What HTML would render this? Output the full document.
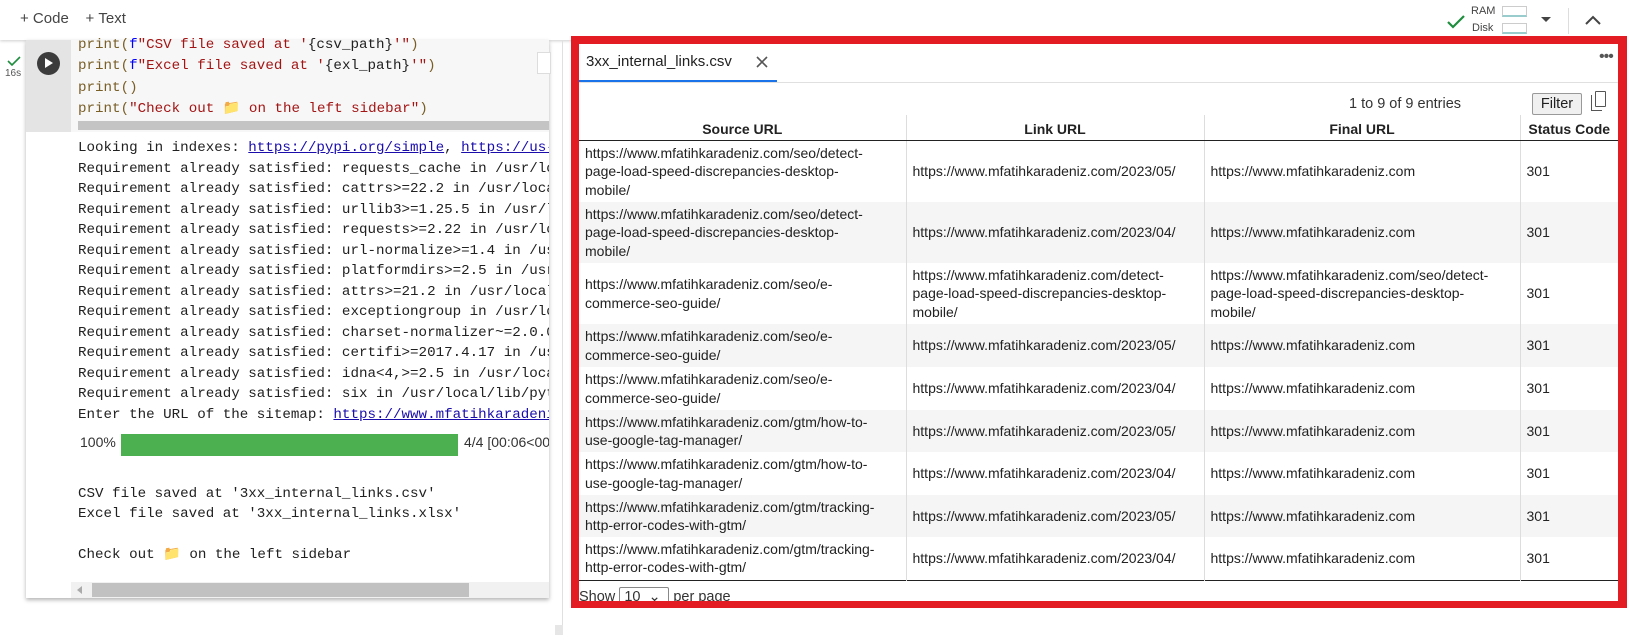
<!DOCTYPE html>
<html><head><meta charset="utf-8"><style>
*{margin:0;padding:0;box-sizing:border-box}
body{width:1627px;height:635px;overflow:hidden;background:#fff;position:relative;font-family:"Liberation Sans",Arial,sans-serif;color:#212121}
.abs{position:absolute}
.mono{font-family:"Liberation Mono","DejaVu Sans Mono",monospace;font-size:14.2px;white-space:pre;color:#212121}
.ol{position:absolute;left:78px;line-height:20px}
a{color:#1a0dab;text-decoration:underline}
table{border-collapse:collapse;font-size:14px;color:#222;table-layout:fixed}
td{padding:2px 6px;border-left:1px solid #ddd;line-height:18.5px;vertical-align:middle;word-break:normal}
td:first-child{border-left:none}
tr.g td{background:#f5f5f5}
th{font-weight:bold;text-align:center;height:25px;border-left:1px solid #ddd;border-bottom:1px solid #222;font-size:14px;vertical-align:bottom;padding-bottom:3px}
th:first-child{border-left:none}
</style></head><body>
<!-- toolbar -->
<div class="abs" style="left:0;top:0;width:1627px;height:40px;background:#fff;box-shadow:0 1px 3px rgba(0,0,0,.2)"></div>
<div class="abs" style="left:20px;top:10px;font-size:15px;color:#444">+&nbsp;Code &nbsp;&nbsp;&nbsp;+&nbsp;Text</div>
<svg class="abs" style="left:1446px;top:14px" width="20" height="16"><path d="M2 8 L7 13 L18 2" stroke="#1e8e3e" stroke-width="2.2" fill="none"/></svg>
<div class="abs" style="left:1471px;top:5px;font-size:11px;color:#444">RAM</div>
<div class="abs" style="left:1472px;top:22px;font-size:11px;color:#444">Disk</div>
<div class="abs" style="left:1502px;top:6px;width:25px;height:11px;border:1px solid #ccc;border-bottom:2px solid #9cc"></div>
<div class="abs" style="left:1502px;top:23px;width:25px;height:11px;border:1px solid #ccc;border-bottom:2px solid #9cc"></div>
<div class="abs" style="left:1541px;top:17px;border-left:5px solid transparent;border-right:5px solid transparent;border-top:5px solid #444"></div>
<div class="abs" style="left:1568px;top:8px;width:1px;height:26px;background:#ddd"></div>
<svg class="abs" style="left:1584px;top:14px" width="18" height="12"><path d="M2 10 L9 3 L16 10" stroke="#444" stroke-width="2" fill="none"/></svg>
<!-- left panel -->
<div class="abs" style="left:562px;top:40px;width:1px;height:595px;background:#e0e0e0"></div>
<div class="abs" style="left:26px;top:40px;width:523px;height:558px;background:#fff;box-shadow:0 2px 4px rgba(0,0,0,.3)"></div>
<div class="abs" style="left:26px;top:40px;width:45px;height:92px;background:#e4e4e4"></div>
<div class="abs" style="left:71px;top:40px;width:478px;height:92px;background:#f7f7f7"></div>
<div class="abs" style="left:78px;top:121px;width:471px;height:9px;background:#c4c4c4"></div>
<div class="abs" style="left:37px;top:52px;width:23px;height:23px;border-radius:50%;background:#3c3c3c"></div>
<div class="abs" style="left:45px;top:58px;border-top:5.5px solid transparent;border-bottom:5.5px solid transparent;border-left:8px solid #fff"></div>
<svg class="abs" style="left:7px;top:56px" width="14" height="10"><path d="M1 5 L5 9 L13 1" stroke="#1e8e3e" stroke-width="1.6" fill="none"/></svg>
<div class="abs" style="left:5px;top:68px;font-size:10px;color:#555">16s</div>
<div class="abs" style="left:537px;top:52px;width:14px;height:22px;border:1px solid #ddd;background:#fff"></div>
<div class="mono ol" style="top:35px;color:#795e26">print(<span style="color:#0000ff">f</span><span style="color:#a31515">"CSV file saved at '</span><span style="color:#212121">{csv_path}</span><span style="color:#a31515">'"</span>)</div>
<div class="mono ol" style="top:56px;color:#795e26">print(<span style="color:#0000ff">f</span><span style="color:#a31515">"Excel file saved at '</span><span style="color:#212121">{exl_path}</span><span style="color:#a31515">'"</span>)</div>
<div class="mono ol" style="top:78px;color:#795e26">print()</div>
<div class="mono ol" style="top:99px;color:#795e26">print(<span style="color:#a31515">"Check out 📁 on the left sidebar"</span>)</div>
<div class="abs" style="left:78px;top:138px;width:471px;height:290px;overflow:hidden">
<div class="mono" style="line-height:20.5px">Looking in indexes: <a>https://pypi.org/simple</a>, <a>https://us-python.pkg.dev</a>
Requirement already satisfied: requests_cache in /usr/local
Requirement already satisfied: cattrs&gt;=22.2 in /usr/local/lib
Requirement already satisfied: urllib3&gt;=1.25.5 in /usr/local
Requirement already satisfied: requests&gt;=2.22 in /usr/local
Requirement already satisfied: url-normalize&gt;=1.4 in /usr/l
Requirement already satisfied: platformdirs&gt;=2.5 in /usr/lo
Requirement already satisfied: attrs&gt;=21.2 in /usr/local/li
Requirement already satisfied: exceptiongroup in /usr/local
Requirement already satisfied: charset-normalizer~=2.0.0 in
Requirement already satisfied: certifi&gt;=2017.4.17 in /usr/l
Requirement already satisfied: idna&lt;4,&gt;=2.5 in /usr/local/l
Requirement already satisfied: six in /usr/local/lib/python3
Enter the URL of the sitemap: <a>https://www.mfatihkaradeniz.com/sitemap</a></div></div>
<div class="abs" style="left:80px;top:434px;font-size:14px;color:#333">100%</div>
<div class="abs" style="left:121px;top:434px;width:337px;height:22px;background:#4caf50"></div>
<div class="abs" style="left:464px;top:434px;width:85px;overflow:hidden;white-space:nowrap;font-size:14px;color:#333">4/4 [00:06&lt;00:00]</div>
<div class="mono ol" style="top:484px">CSV file saved at '3xx_internal_links.csv'</div>
<div class="mono ol" style="top:504px">Excel file saved at '3xx_internal_links.xlsx'</div>
<div class="mono ol" style="top:545px">Check out <span style="color:#d9a400">📁</span> on the left sidebar</div>
<div class="abs" style="left:71px;top:582px;width:478px;height:16px;background:#f1f1f1"></div>
<div class="abs" style="left:92px;top:583px;width:377px;height:14px;background:#c1c1c1"></div>
<div class="abs" style="left:77px;top:586px;border-top:4px solid transparent;border-bottom:4px solid transparent;border-right:5px solid #aaa"></div>
<div class="abs" style="left:555px;top:625px;width:8px;height:10px;background:#e6e6e6"></div>
<!-- right panel -->
<div class="abs" style="left:571px;top:36px;height:572px;border:8px solid #e31b23;border-right-width:9px;width:1056px"></div>
<div class="abs" style="left:579px;top:44px;width:1039px;height:557px;overflow:hidden;background:#fff">
 <div class="abs" style="left:0;top:38px;width:1039px;height:1px;background:#e0e0e0"></div>
 <div class="abs" style="left:7px;top:9px;font-size:15px;color:#222">3xx_internal_links.csv</div>
 <svg class="abs" style="left:177px;top:12px" width="12" height="12"><path d="M1 1 L11 11 M11 1 L1 11" stroke="#555" stroke-width="1.6"/></svg>
 <div class="abs" style="left:0;top:36px;width:198px;height:2px;background:#1a73e8"></div>
 <div class="abs" style="left:1020px;top:4px;font-size:16px;color:#555;letter-spacing:-1px">•••</div>
 <div class="abs" style="left:770px;top:52px;font-size:14.5px;color:#333">1 to 9 of 9 entries</div>
 <div class="abs" style="left:953px;top:49px;width:50px;height:22px;border:1px solid #999;border-radius:2px;background:#f0f0f0;font-size:14.5px;text-align:center;line-height:20px">Filter</div>
 <div class="abs" style="left:1016px;top:47px;width:11px;height:16px;border:1.5px solid #555;border-radius:1px"></div>
 <div class="abs" style="left:1012px;top:51px;width:11px;height:16px;border-left:1.5px solid #555;border-bottom:1.5px solid #555;background:transparent"></div>
 <table class="abs" style="left:0;top:71px;width:1039px">
 <colgroup><col style="width:327px"><col style="width:298px"><col style="width:316px"><col style="width:98px"></colgroup>
 <tr><th>Source URL</th><th>Link URL</th><th>Final URL</th><th>Status Code</th></tr>
 <tr style="height:62px"><td>https://www.mfatihkaradeniz.com/seo/detect-<br>page-load-speed-discrepancies-desktop-<br>mobile/</td><td>https://www.mfatihkaradeniz.com/2023/05/</td><td>https://www.mfatihkaradeniz.com</td><td>301</td></tr>
 <tr class="g" style="height:61px"><td>https://www.mfatihkaradeniz.com/seo/detect-<br>page-load-speed-discrepancies-desktop-<br>mobile/</td><td>https://www.mfatihkaradeniz.com/2023/04/</td><td>https://www.mfatihkaradeniz.com</td><td>301</td></tr>
 <tr style="height:61px"><td>https://www.mfatihkaradeniz.com/seo/e-<br>commerce-seo-guide/</td><td>https://www.mfatihkaradeniz.com/detect-<br>page-load-speed-discrepancies-desktop-<br>mobile/</td><td>https://www.mfatihkaradeniz.com/seo/detect-<br>page-load-speed-discrepancies-desktop-<br>mobile/</td><td>301</td></tr>
 <tr class="g" style="height:43px"><td>https://www.mfatihkaradeniz.com/seo/e-<br>commerce-seo-guide/</td><td>https://www.mfatihkaradeniz.com/2023/05/</td><td>https://www.mfatihkaradeniz.com</td><td>301</td></tr>
 <tr style="height:43px"><td>https://www.mfatihkaradeniz.com/seo/e-<br>commerce-seo-guide/</td><td>https://www.mfatihkaradeniz.com/2023/04/</td><td>https://www.mfatihkaradeniz.com</td><td>301</td></tr>
 <tr class="g" style="height:42px"><td>https://www.mfatihkaradeniz.com/gtm/how-to-<br>use-google-tag-manager/</td><td>https://www.mfatihkaradeniz.com/2023/05/</td><td>https://www.mfatihkaradeniz.com</td><td>301</td></tr>
 <tr style="height:43px"><td>https://www.mfatihkaradeniz.com/gtm/how-to-<br>use-google-tag-manager/</td><td>https://www.mfatihkaradeniz.com/2023/04/</td><td>https://www.mfatihkaradeniz.com</td><td>301</td></tr>
 <tr class="g" style="height:42px"><td>https://www.mfatihkaradeniz.com/gtm/tracking-<br>http-error-codes-with-gtm/</td><td>https://www.mfatihkaradeniz.com/2023/05/</td><td>https://www.mfatihkaradeniz.com</td><td>301</td></tr>
 <tr style="height:43px;border-bottom:1px solid #222"><td>https://www.mfatihkaradeniz.com/gtm/tracking-<br>http-error-codes-with-gtm/</td><td>https://www.mfatihkaradeniz.com/2023/04/</td><td>https://www.mfatihkaradeniz.com</td><td>301</td></tr>
 </table>
 <div class="abs" style="left:0;top:543px;font-size:14.5px;color:#333;white-space:nowrap">Show <span style="display:inline-block;width:50px;height:20px;border:1px solid #888;border-radius:2px;vertical-align:middle;padding-left:4px;line-height:18px">10 &nbsp;⌄</span> per page</div>
</div>
</body></html>
